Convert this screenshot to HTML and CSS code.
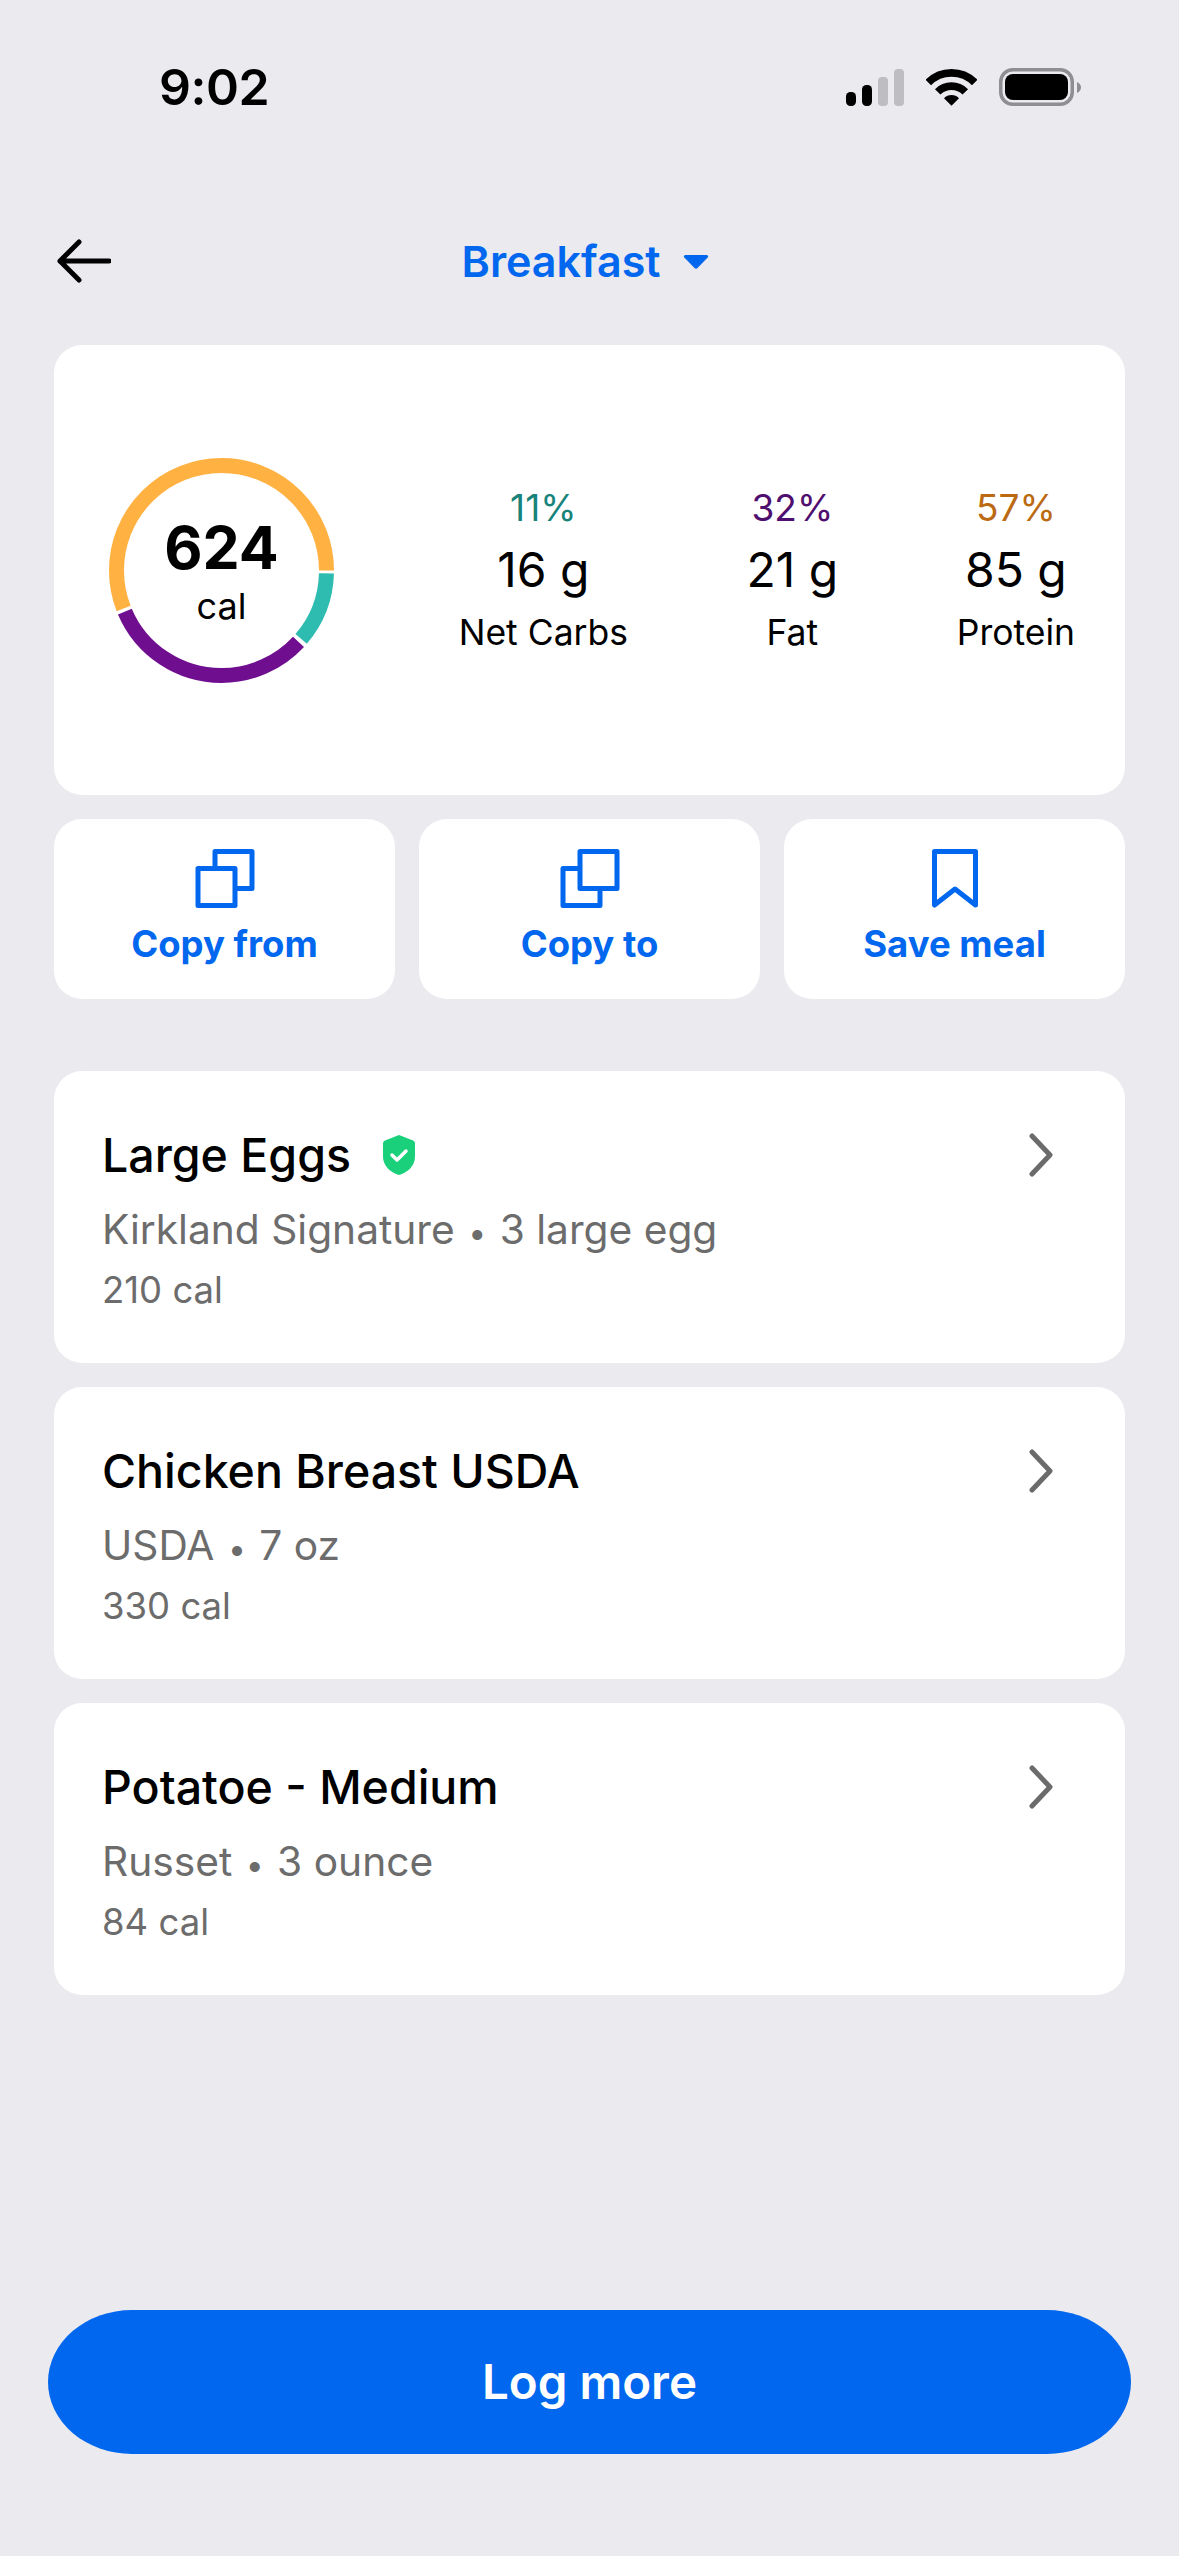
FILE: index.html
```html
<!DOCTYPE html>
<html lang="en">
<head>
<meta charset="utf-8">
<title>Breakfast</title>
<link rel="stylesheet" href="styles.css">
</head>
<body>
<main class="screen">
  <div class="status">
    <span class="time">9:02</span>
    <div class="status-icons">
      <svg class="signal" width="58" height="37" viewBox="0 0 58 37">
        <rect x="0" y="23" width="10" height="14" rx="4.5" fill="#000"/>
        <rect x="16" y="16" width="10" height="21" rx="4.5" fill="#000"/>
        <rect x="32" y="8" width="10" height="29" rx="4" fill="#bdbdc2"/>
        <rect x="48" y="0" width="10" height="37" rx="4" fill="#bdbdc2"/>
      </svg>
      <svg class="wifi" width="51" height="37" viewBox="0 0 51 37">
        <path d="M2.3 13.5A32.8 32.8 0 0 1 48.7 13.5" fill="none" stroke="#000" stroke-width="7.7"/>
        <path d="M11.7 22.9A19.5 19.5 0 0 1 39.3 22.9" fill="none" stroke="#000" stroke-width="7.7"/>
        <path d="M25.5 36.7L18 29.2A10.6 10.6 0 0 1 33 29.2Z" fill="#000"/>
      </svg>
      <svg class="battery" width="82" height="38" viewBox="0 0 82 38">
        <rect x="1.75" y="1.75" width="71.5" height="34.5" rx="12" fill="none" stroke="#8e8e93" stroke-width="3.5"/>
        <rect x="6" y="6" width="63" height="26" rx="8" fill="#000"/>
        <path d="M78 14C80.500 15 82 17 82 19.500C82 22 80.500 24 78 25Z" fill="#8e8e93"/>
      </svg>
    </div>
  </div>

  <header class="nav">
    <svg class="back" width="56" height="44" viewBox="0 0 56 44">
      <path d="M54 22H5M24 3L5 22L24 41" fill="none" stroke="#000" stroke-width="5" stroke-linecap="round" stroke-linejoin="round"/>
    </svg>
    <div class="title">
      <span>Breakfast</span>
      <svg width="26" height="15" viewBox="0 0 26 15"><path d="M2.500 1H23.500C25 1 25.700 2.500 24.700 3.600L14.500 14C13.600 14.900 12.400 14.900 11.500 14L1.300 3.600C.3 2.500 1 1 2.500 1Z" fill="#0067ee"/></svg>
    </div>
  </header>

  <section class="card summary">
    <div class="ring">
      <svg width="225" height="225" viewBox="0 0 225 225">
        <circle cx="112.500" cy="112.500" r="105" pathLength="100" fill="none" stroke="#2fbcb0" stroke-width="15" stroke-dasharray="10.85 89.15" stroke-dashoffset="-0.45"/>
        <circle cx="112.500" cy="112.500" r="105" pathLength="100" fill="none" stroke="#6f0f8f" stroke-width="15" stroke-dasharray="31.7 68.3" stroke-dashoffset="-11.9"/>
        <circle cx="112.500" cy="112.500" r="105" pathLength="100" fill="none" stroke="#ffb142" stroke-width="15" stroke-dasharray="55.9 44.1" stroke-dashoffset="-44.1"/>
      </svg>
      <div class="ring-label">
        <span class="ring-num">624</span>
        <span class="ring-unit">cal</span>
      </div>
    </div>
    <div class="macros">
      <div class="macro">
        <span class="pct pct-carb">11%</span>
        <span class="val">16 g</span>
        <span class="lab">Net Carbs</span>
      </div>
      <div class="macro">
        <span class="pct pct-fat">32%</span>
        <span class="val">21 g</span>
        <span class="lab">Fat</span>
      </div>
      <div class="macro">
        <span class="pct pct-pro">57%</span>
        <span class="val">85 g</span>
        <span class="lab">Protein</span>
      </div>
    </div>
  </section>

  <section class="actions">
    <button class="card action">
      <svg width="60" height="60" viewBox="0 0 60 60" fill="none" stroke="#0067ee" stroke-width="5" stroke-linejoin="round">
        <rect x="20" y="3.500" width="37" height="37"/>
        <rect x="3" y="20.500" width="37" height="37" fill="#fff"/>
      </svg>
      <span>Copy from</span>
    </button>
    <button class="card action">
      <svg width="60" height="60" viewBox="0 0 60 60" fill="none" stroke="#0067ee" stroke-width="5" stroke-linejoin="round">
        <rect x="3" y="20.500" width="37" height="37"/>
        <rect x="20" y="3.500" width="37" height="37" fill="#fff"/>
      </svg>
      <span>Copy to</span>
    </button>
    <button class="card action">
      <svg width="60" height="60" viewBox="0 0 60 60" fill="none" stroke="#0067ee" stroke-width="5" stroke-linejoin="round">
        <path d="M9.500 3.500H50.500V57L30 41L9.500 57Z"/>
      </svg>
      <span>Save meal</span>
    </button>
  </section>

  <section class="foods">
    <article class="card food">
      <div class="food-text">
        <div class="food-name">Large Eggs
          <svg class="shield" width="32" height="40" viewBox="0 0 32 40">
            <path d="M16 0L30 5.500C31.200 6 32 7 32 8.500V22C32 31 24 38 16 40C8 38 0 31 0 22V8.500C0 7 .8 6 2 5.500Z" fill="#1ad07a"/>
            <path d="M9 20L14 25L23 16" fill="none" stroke="#fff" stroke-width="3.500" stroke-linecap="round" stroke-linejoin="round"/>
          </svg>
        </div>
        <div class="food-sub">Kirkland Signature <span class="dot">•</span> 3 large egg</div>
        <div class="food-cal">210 cal</div>
      </div>
      <svg class="chev" width="24" height="44" viewBox="0 0 24 44"><path d="M3 3L21 22L3 41" fill="none" stroke="#6b6b6b" stroke-width="5" stroke-linecap="round" stroke-linejoin="round"/></svg>
    </article>
    <article class="card food">
      <div class="food-text">
        <div class="food-name">Chicken Breast USDA</div>
        <div class="food-sub">USDA <span class="dot">•</span> 7 oz</div>
        <div class="food-cal">330 cal</div>
      </div>
      <svg class="chev" width="24" height="44" viewBox="0 0 24 44"><path d="M3 3L21 22L3 41" fill="none" stroke="#6b6b6b" stroke-width="5" stroke-linecap="round" stroke-linejoin="round"/></svg>
    </article>
    <article class="card food">
      <div class="food-text">
        <div class="food-name">Potatoe - Medium</div>
        <div class="food-sub">Russet <span class="dot">•</span> 3 ounce</div>
        <div class="food-cal">84 cal</div>
      </div>
      <svg class="chev" width="24" height="44" viewBox="0 0 24 44"><path d="M3 3L21 22L3 41" fill="none" stroke="#6b6b6b" stroke-width="5" stroke-linecap="round" stroke-linejoin="round"/></svg>
    </article>
  </section>

  <button class="log">Log more</button>
</main>
</body>
</html>
```
FILE: styles.css
```css
* { box-sizing: border-box; }
html, body { margin: 0; padding: 0; }
body {
  background: #eaeaef;
  font-family: Inter, "Noto Sans", sans-serif;
  color: #000;
}
.screen {
  width: 1179px;
  height: 2556px;
  padding: 68px 54px 102px;
  display: flex;
  flex-direction: column;
  overflow: hidden;
}
.status {
  display: flex;
  justify-content: space-between;
  align-items: center;
  height: 38px;
  padding: 0 44px 0 105px;
}
.time {
  font-size: 50px;
  font-weight: 600;
  letter-spacing: -0.5px;
  line-height: 38px;
}
.status-icons {
  display: flex;
  align-items: flex-start;
}
.signal { margin-top: 1px; margin-right: 22px; }
.wifi { margin-top: 1px; margin-right: 22px; }
.nav {
  margin-top: 133px;
  height: 44px;
  display: grid;
  grid-template-columns: 1fr auto 1fr;
  align-items: center;
}
.back { margin-left: 1px; }
.title {
  grid-column: 2;
  display: flex;
  align-items: center;
  gap: 23px;
  margin-right: 8px;
  color: #0067ee;
  font-size: 43px;
  font-weight: 600;
  line-height: 44px;
}
.card {
  background: #fff;
  border-radius: 28px;
}
.summary {
  margin-top: 62px;
  height: 450px;
  padding: 0 50px 0 55px;
  display: flex;
  align-items: center;
}
.ring {
  position: relative;
  width: 225px;
  height: 225px;
}
.ring svg { display: block; }
.ring-label {
  position: absolute;
  inset: 0;
  padding-top: 16px;
  display: flex;
  flex-direction: column;
  align-items: center;
  justify-content: center;
}
.ring-num {
  font-size: 59px;
  font-weight: 700;
  line-height: 56px;
}
.ring-unit {
  font-size: 36px;
  line-height: 60px;
}
.macros {
  margin-left: auto;
  display: flex;
  gap: 118.5px;
}
.macro {
  display: flex;
  flex-direction: column;
  align-items: center;
  line-height: 62px;
}
.pct { font-size: 37px; }
.pct-carb { color: #17837a; }
.pct-fat { color: #4f0f6f; }
.pct-pro { color: #bb6a12; }
.val { font-size: 48px; font-weight: 400; }
.lab { font-size: 35.5px; padding-top: 1px; }
.actions {
  margin-top: 24px;
  display: grid;
  grid-template-columns: repeat(3, 1fr);
  gap: 24px;
}
.action {
  height: 180px;
  border: 0;
  padding: 29px 0 0;
  display: flex;
  flex-direction: column;
  align-items: center;
  font-family: inherit;
  color: #0067ee;
  font-size: 36.5px;
  font-weight: 700;
  line-height: 44px;
}
.action span { margin-top: 14px; }
.foods {
  margin-top: 72px;
  display: flex;
  flex-direction: column;
  gap: 24px;
}
.food {
  height: 292px;
  padding: 54px 72px 0 48px;
  display: flex;
  justify-content: space-between;
  align-items: flex-start;
}
.chev { margin-top: 8px; }
.food-name {
  display: flex;
  align-items: center;
  font-size: 46.5px;
  font-weight: 450;
  line-height: 60px;
}
.shield { margin-left: 32px; }
.food-sub {
  margin-top: 15px;
  color: #6c6c6c;
  font-size: 40.7px;
  line-height: 60px;
}
.dot { font-size: 32px; padding: 0 2px; }
.food-cal {
  margin-top: 5px;
  color: #6c6c6c;
  font-size: 36.5px;
  line-height: 44px;
}
.log {
  margin: auto -6px 0;
  height: 144px;
  padding: 0 0 2px;
  border: 0;
  border-radius: 84px / 72px;
  background: #0067ee;
  color: #fff;
  font-family: inherit;
  font-size: 47.5px;
  font-weight: 600;
}
```
